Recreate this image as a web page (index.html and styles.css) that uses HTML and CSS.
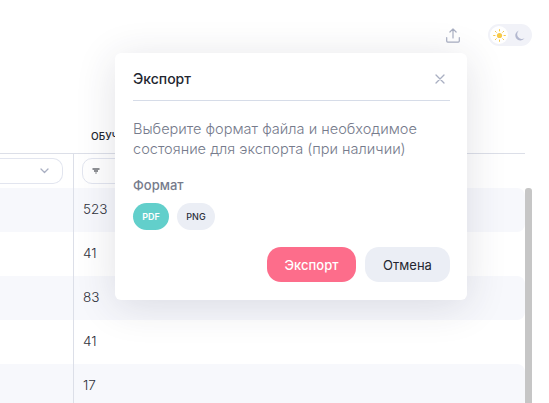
FILE: index.html
```html
<!DOCTYPE html>
<html lang="ru">
<head>
<meta charset="utf-8">
<title>Экспорт</title>
<link rel="stylesheet" href="styles.css">
</head>
<body>
<div class="page">
  <header class="topbar">
    <svg class="upload" width="14" height="15" viewBox="0 0 14 15" fill="none" stroke="#a9afc2" stroke-width="1.2" stroke-linecap="round" stroke-linejoin="round"><path d="M7 10V1M3.900 4 7 .9 10.100 4M.7 9.500v3.600a1 1 0 0 0 1 1h10.600a1 1 0 0 0 1-1V9.500"/></svg>
    <div class="theme">
      <span class="theme-knob">
        <svg width="13" height="13" viewBox="0 0 13 13" fill="none" stroke="#f7c948" stroke-width="1" stroke-linecap="round"><circle cx="6.5" cy="6.5" r="2.6" fill="#f7c948" stroke="none"/><path d="M6.500.6v1.400M6.500 11v1.400M.6 6.500H2M11 6.500h1.400M2.300 2.300l1 1M9.700 9.700l1 1M2.300 10.700l1-1M9.700 3.300l1-1"/></svg>
      </span>
      <svg class="moon" width="11" height="11" viewBox="0 0 11 11"><path d="M5 .6A5 5 0 1 0 10.600 8 4.600 4.600 0 0 1 5 .6Z" fill="#b3b8cf"/></svg>
    </div>
  </header>
  <div class="heads"><span class="head-title">ОБУЧ</span></div>
  <div class="filters">
    <div class="filter-a">
      <div class="select">
        <svg width="9" height="6" viewBox="0 0 9 6" fill="none" stroke="#a9afc2" stroke-width="1.3" stroke-linecap="round" stroke-linejoin="round"><path d="M1 1l3.500 3.500L8 1"/></svg>
      </div>
    </div>
    <div class="filter-b">
      <div class="input">
        <svg width="8" height="6" viewBox="0 0 8 6" fill="none" stroke="#1f222b" stroke-width="1.200"><path d="M.5 1h7M2 3h4M3.500 5h1"/></svg>
      </div>
    </div>
  </div>
  <div class="body-wrap">
    <div class="rows">
      <div class="row alt"><div class="cell-a"></div><div class="cell-b">523</div></div>
      <div class="row"><div class="cell-a"></div><div class="cell-b">41</div></div>
      <div class="row alt"><div class="cell-a"></div><div class="cell-b">83</div></div>
      <div class="row"><div class="cell-a"></div><div class="cell-b">41</div></div>
      <div class="row alt"><div class="cell-a"></div><div class="cell-b">17</div></div>
    </div>
    <div class="scrollbar"></div>
  </div>
  <div class="modal">
    <div class="modal-head">
      <h2 class="modal-title">Экспорт</h2>
      <svg class="close" width="10" height="10" viewBox="0 0 10 10" fill="none" stroke="#a9afc2" stroke-width="1.300" stroke-linecap="round"><path d="M1 1l8 8M9 1 1 9"/></svg>
    </div>
    <p class="modal-text">Выберите формат файла и необходимое состояние для экспорта (при наличии)</p>
    <div class="format-label">Формат</div>
    <div class="formats">
      <span class="chip chip-on">PDF</span>
      <span class="chip">PNG</span>
    </div>
    <div class="actions">
      <button class="btn btn-primary">Экспорт</button>
      <button class="btn btn-muted">Отмена</button>
    </div>
  </div>
</div>
</body>
</html>
```
FILE: styles.css
```css
* { box-sizing: border-box; }
html, body { margin: 0; height: 100%; }
body { font-family: Inter, "Noto Sans", sans-serif; background: #fff; overflow: hidden; }
.page { position: relative; width: 549px; height: 403px; overflow: hidden; }

.topbar { height: 70px; display: flex; justify-content: flex-end; align-items: flex-start; padding: 24px 17px 0 0; }
.upload { margin: 4px 28px 0 0; }
.theme { width: 44px; height: 22px; border-radius: 11px; background: #f1f2f8; display: flex; align-items: center; padding: 0 7px 0 1px; justify-content: space-between; }
.theme-knob { width: 18px; height: 18px; margin-left: 1px; border-radius: 50%; background: #fff; display: flex; align-items: center; justify-content: center; }
.moon { display: block; }

.heads { height: 84px; width: 525px; border-bottom: 1px solid #dcdfe8; padding: 60px 0 0 91px; font-size: 10px; font-weight: 500; line-height: 12px; color: #23262f; }
.head-title { display: block; }

.filters { display: flex; height: 34px; width: 525px; }
.filter-a { width: 74px; border-right: 1px solid #dcdfe8; padding: 4px 10px 4px 0; flex: none; }
.select { height: 26px; border: 1px solid #e2e5ef; border-left: 0; border-radius: 0 10px 10px 0; display: flex; align-items: center; justify-content: flex-end; padding-right: 13px; }
.filter-b { flex: 1; padding: 4px 0 4px 8px; }
.input { width: 120px; height: 26px; border: 1px solid #e2e5ef; border-radius: 10px; display: flex; align-items: center; padding-left: 9px; }

.body-wrap { display: flex; align-items: stretch; }
.rows { width: 525px; flex: none; }
.row { height: 44px; display: flex; font-size: 13.5px; font-weight: 300; color: #2f323b; }
.row.alt { background: #f7f8fc; border-radius: 0 8px 8px 0; }
.cell-a { width: 74px; flex: none; border-right: 1px solid #dcdfe8; }
.cell-b { padding-left: 9px; line-height: 42px; }
.scrollbar { width: 7px; background: #c6c6c6; border-radius: 3px 3px 0 0; }

.modal { position: absolute; left: 115px; top: 53px; width: 352px; height: 247px; background: #fff; border-radius: 6px; padding: 0 17px 0 18px; box-shadow: 0 6px 40px rgba(40, 44, 70, .14); }
.modal-head { height: 48px; border-bottom: 1px solid #d6dce8; display: flex; align-items: center; justify-content: space-between; padding: 4px 5px 0 0; }
.modal-title { margin: 0; font-size: 14px; font-weight: 500; color: #23262f; }
.close { display: block; }
.modal-text { margin: 18px 0 0; font-size: 14.55px; font-weight: 300; line-height: 20px; color: #767b8c; }
.format-label { margin-top: 18px; font-size: 13px; font-weight: 500; line-height: 16px; color: #767b8c; }
.formats { display: flex; gap: 8px; margin-top: 10px; }
.chip { height: 27px; width: 38px; border-radius: 14px; background: #ebeef5; font-size: 9px; font-weight: 500; line-height: 27px; text-align: center; color: #2a2d3a; }
.chip-on { width: 36px; background: #62cfcb; color: #fff; font-weight: 600; }
.actions { display: flex; justify-content: flex-end; gap: 9px; margin-top: 17px; }
.btn { height: 35px; border: 0; border-radius: 14px; font-family: inherit; font-size: 13px; font-weight: 400; }
.btn-primary { width: 89px; background: #fd6d8b; color: #fff; font-weight: 500; }
.btn-muted { width: 85px; background: #ebeef5; color: #23262f; }
```
